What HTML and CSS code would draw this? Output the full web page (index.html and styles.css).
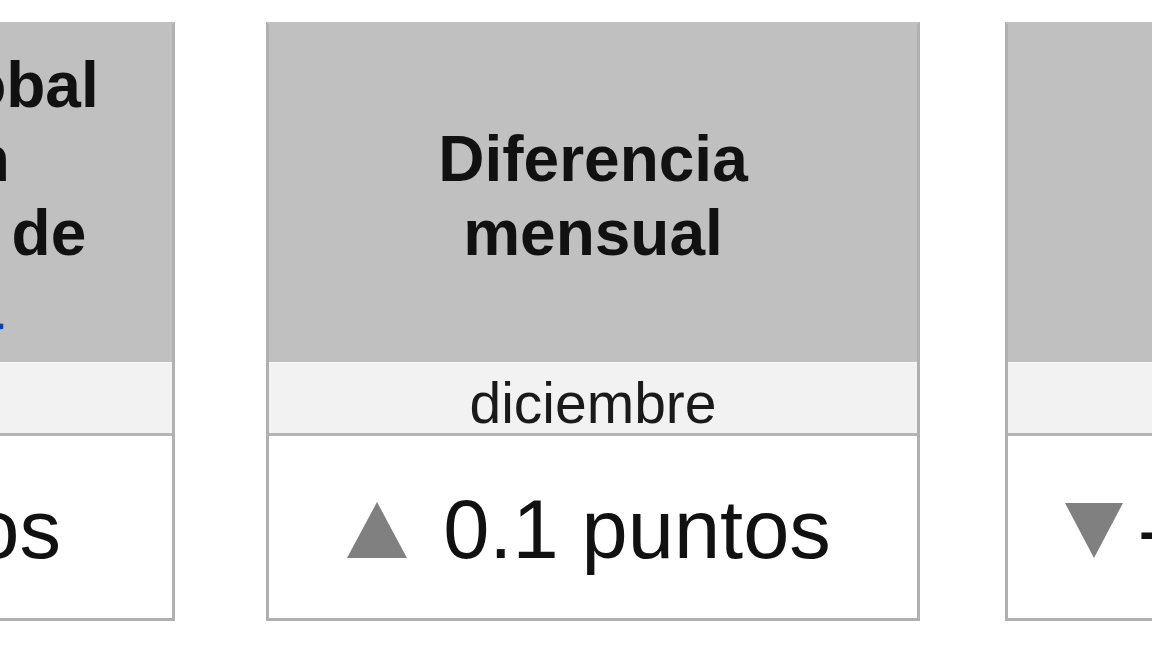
FILE: index.html
```html
<!DOCTYPE html>
<html lang="es">
<head>
<meta charset="utf-8">
<title>Indicadores</title>
<link rel="stylesheet" href="styles.css">
</head>
<body>
<div class="row">
  <table class="card card-first">
    <tr><th class="head">Promedio global<br>de opinión<br>del gobierno de<br><a href="#" class="link">Venezuela</a></th></tr>
    <tr><th class="sub">diciembre</th></tr>
    <tr><td class="value">65.3 puntos</td></tr>
  </table>
  <table class="card card-mid">
    <tr><th class="head">Diferencia<br>mensual</th></tr>
    <tr><th class="sub">diciembre</th></tr>
    <tr><td class="value"><svg class="tri tri-up" width="60" height="56" viewBox="0 0 60 56"><polygon points="30,0 60,56 0,56" fill="#808080"/></svg>0.1 puntos</td></tr>
  </table>
  <table class="card card-last">
    <tr><th class="head">Diferencia<br>anual</th></tr>
    <tr><th class="sub">diciembre</th></tr>
    <tr><td class="value"><svg class="tri tri-down" width="58" height="55" viewBox="0 0 58 55"><polygon points="0,0 58,0 29,55" fill="#808080"/></svg>-0.15 puntos</td></tr>
  </table>
</div>
</body>
</html>
```

FILE: styles.css
```css
html, body {
  margin: 0;
  padding: 0;
  background: #ffffff;
  overflow: hidden;
}

body {
  font-family: "Liberation Sans", Arial, sans-serif;
  color: #111111;
}

.row {
  display: flex;
  align-items: flex-start;
  margin-left: -479px;
  padding-top: 22px;
  width: 2200px;
}

.card {
  flex: 0 0 654px;
  width: 654px;
  box-sizing: border-box;
  border-collapse: separate;
  border-spacing: 0;
  border: 3px solid #b0b0b0;
  border-top-color: #c0c0c0;
  table-layout: fixed;
}

.card-mid {
  margin-left: 91px;
}

.card-last {
  margin-left: 85px;
}

.card .head,
.card .sub,
.card .value {
  text-align: center;
  box-sizing: border-box;
}

.card .head {
  height: 337px;
  padding: 5px 0 0;
  background: #c0c0c0;
  font-weight: bold;
  font-size: 64px;
  line-height: 74px;
  vertical-align: middle;
  color: #111111;
}

.link {
  color: #0645ad;
  text-decoration: none;
}

.card .sub {
  height: 73px;
  padding: 10px 0 0;
  background: #f2f2f2;
  border-top: 1px solid #f8f8f8;
  border-bottom: 3px solid #b4b4b4;
  font-weight: normal;
  font-size: 57px;
  line-height: 60px;
  vertical-align: top;
  color: #1a1a1a;
}

.card .value {
  height: 182px;
  padding: 48px 8px 0 0;
  background: #ffffff;
  font-size: 83px;
  line-height: 92px;
  vertical-align: top;
  white-space: nowrap;
  color: #111111;
}

.card-last .value {
  padding-right: 0;
}

.tri {
  display: inline-block;
  vertical-align: baseline;
}

.tri-up {
  margin-right: 36px;
}

.tri-down {
  margin-right: 15px;
}
```
